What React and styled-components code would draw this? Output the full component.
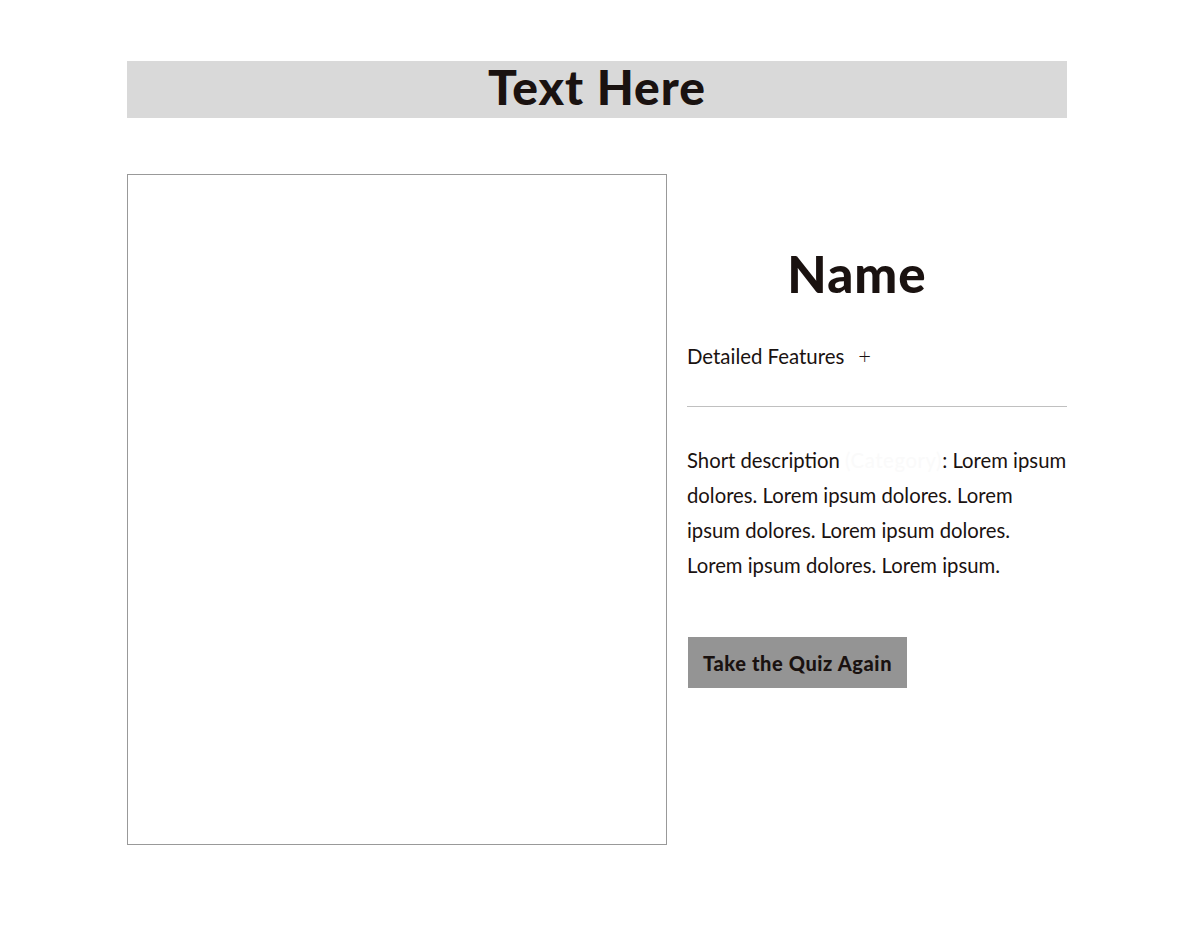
import styled, { createGlobalStyle } from "styled-components";

const GlobalStyle = createGlobalStyle`
  body {
    margin: 0;
    background: #fff;
    font-family: Lato, "Liberation Sans", sans-serif;
    color: #1a1210;
  }
`;

const Page = styled.div`
  width: 940px;
  margin: 61px auto 0;
`;

const Banner = styled.div`
  height: 57px;
  background: #d9d9d9;
  display: flex;
  align-items: center;
  justify-content: center;
`;

const BannerTitle = styled.h1`
  margin: 0 0 6px;
  font-size: 48px;
  font-weight: 900;
  letter-spacing: 1px;
  line-height: 1;
`;

const Result = styled.div`
  display: flex;
  gap: 20px;
  margin-top: 56px;
`;

const ImageFrame = styled.div`
  width: 538px;
  height: 669px;
  border: 1px solid #999;
  flex-shrink: 0;
`;

const Details = styled.div`
  flex: 1;
  padding-top: 70px;
`;

const Name = styled.h2`
  margin: 0;
  padding-right: 40px;
  text-align: center;
  font-size: 51px;
  font-weight: 900;
  letter-spacing: 1px;
  line-height: 60px;
`;

const FeaturesToggle = styled.div`
  display: flex;
  align-items: center;
  gap: 14px;
  margin-top: 36px;
  padding-bottom: 34px;
  border-bottom: 1px solid #c0c0c0;
  font-size: 20.4px;
  line-height: 32px;
`;

const Plus = styled.span`
  font-size: 22px;
  font-weight: 300;
`;

const Description = styled.p`
  margin: 36px 0 0;
  font-size: 20.3px;
  line-height: 35px;
`;

const Hidden = styled.span`
  color: #fafafa;
  word-spacing: 3px;
  letter-spacing: 0.6px;
`;

const QuizButton = styled.button`
  display: block;
  margin-top: 54px;
  margin-left: 1px;
  width: 219px;
  height: 51px;
  padding: 0;
  border: none;
  background: #949494;
  color: #1a1210;
  font-family: Lato, "Liberation Sans", sans-serif;
  font-size: 20px;
  font-weight: 900;
  letter-spacing: 0.6px;
  cursor: pointer;
`;

export default function App() {
  return (
    <>
      <GlobalStyle />
      <Page>
        <Banner>
          <BannerTitle>Text Here</BannerTitle>
        </Banner>
        <Result>
          <ImageFrame />
          <Details>
            <Name>Name</Name>
            <FeaturesToggle>
              Detailed Features <Plus>+</Plus>
            </FeaturesToggle>
            <Description>
              Short description <Hidden>(Category)</Hidden>: Lorem ipsum
              dolores. Lorem ipsum dolores. Lorem ipsum dolores. Lorem ipsum
              dolores. Lorem ipsum dolores. Lorem ipsum.
            </Description>
            <QuizButton>Take the Quiz Again</QuizButton>
          </Details>
        </Result>
      </Page>
    </>
  );
}
